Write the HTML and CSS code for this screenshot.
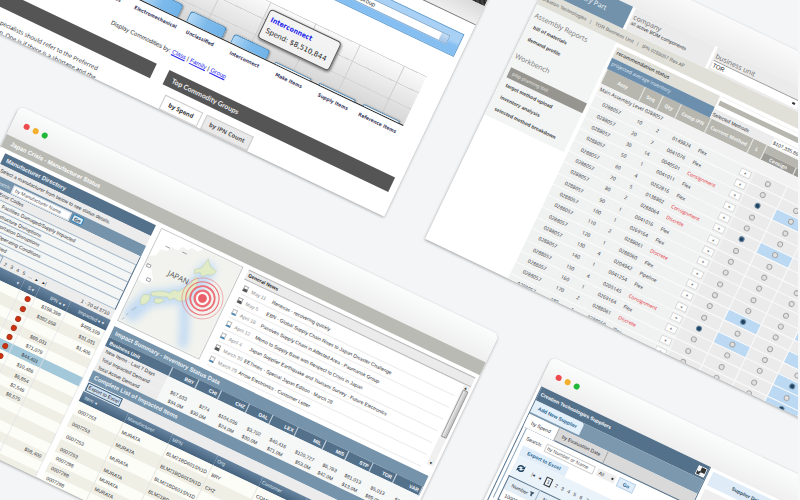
FILE: index.html
```html
<!DOCTYPE html>
<html lang="en">
<head>
<meta charset="utf-8">
<title>Application windows</title>
<link rel="stylesheet" href="styles.css">
</head>
<body>
<main class="stage">

<section class="win win-spend">
  <div class="sp-dark"></div>
  <div class="sp-head"></div>
  <div class="sp-filter"><select aria-label="Commodity group"><option>Commodity Group</option></select></div>
  <div class="chart">
    <div class="plot">
      <div class="cat"><i class="bar b12"></i></div>
      <div class="cat"><i class="bar b12"></i></div>
      <div class="cat"><i class="bar b10"></i></div>
      <div class="cat"><i class="bar b8"></i></div>
      <div class="cat"><i class="bar b1"></i></div>
      <div class="cat"><i class="bar b1"></i></div>
      <div class="cat"><i class="bar b1"></i></div>
    </div>
    <div class="axis">
      <span>Passives</span><span>Electromechanical</span><span>Unclassified</span><span>Interconnect</span><span>Make Items</span><span>Supply Items</span><span>Reference Items</span>
    </div>
    <div class="tip"><b>Interconnect</b><span>Spend: $8,510,844</span></div>
  </div>
  <p class="sp-by">Display Commodities by: <a href="#">Class</a> | <a href="#">Family</a> | <a href="#">Group</a></p>
  <div class="sp-cols">
    <div class="sp-left">
      <h2></h2>
      <p>Commodity specialists should refer to the Preferred<br>Supplier reason. One is if there is a shortage and the</p>
    </div>
    <div class="sp-right">
      <h2>Top Commodity Groups</h2>
      <div class="sp-tabs"><button class="on">by Spend</button><button>by IPN Count</button></div>
    </div>
  </div>
</section>

<section class="win win-plan">
  <div class="pl-chrome"></div>
  <div class="pl-top">
    <div class="pl-tab">Query Part</div>
    <div class="pl-cell"><b>company</b><span>all active BOM components</span></div>
    <div class="pl-cell"><b>business unit</b><select aria-label="business unit"><option>TOR</option></select></div>
  </div>
  <div class="pl-crumb">Creation Technologies &nbsp; | &nbsp; TOR Business Unit &nbsp; | &nbsp; IPN 0288057 Rev AF</div>
  <div class="pl-body">
    <nav class="pl-side">
      <h3>Assembly Reports</h3>
      <a href="#">bill of materials</a>
      <a href="#">demand profile</a>
      <h3>Workbench</h3>
      <a href="#" class="on">pibp planning tool</a>
      <a href="#">target method upload</a>
      <a href="#">inventory analysis</a>
      <a href="#">selected method breakdown</a>
    </nav>
    <div class="pl-main">
      <div class="pl-sum">
        <div class="pl-status"><span>recommendation status</span><span class="blue">projected average inventory</span></div>
        <div class="pl-methods">
          <div class="pl-strip"></div>
          <div class="pl-sel"><span>Selected Methods</span><span class="amt">$107,335.86</span></div>
        </div>
      </div>
      <table class="pl-table">
        <colgroup><col class="w42"><col class="w20"><col class="w20"><col class="w33"><col class="w47"><col class="w15"><col class="w36"><col class="w36"><col class="w36"><col class="w36"></colgroup>
        <thead>
          <tr><th rowspan="2">Assy</th><th rowspan="2">Seq</th><th rowspan="2">Qty</th><th rowspan="2">Comp IPN</th><th rowspan="2">Current Method</th><th rowspan="2">L</th><th colspan="4"></th></tr>
          <tr class="sub"><th>Consign</th><th>Discrete</th><th>Pipeline</th><th>Flex</th></tr>
        </thead>
        <tbody id="plan-rows">
          <tr class="level"><td colspan="10">Main Assembly Level 0288057</td></tr>
        </tbody>
      </table>
    </div>
  </div>
</section>

<section class="win win-crisis">
  <div class="chrome"><i></i><i></i><i></i></div>
  <h1>Japan Crisis - Manufacturer Status</h1>
  <div class="cr-body">
    <div class="cr-left">
      <h2>Manufacturer Directory</h2>
      <p class="note">Select a manufacturer from below to see status details.</p>
      <form class="cr-search"><label for="mf">Search:</label><input id="mf" placeholder="by Manufacturer Name"><button type="button">Go</button></form>
      <ul class="codes">
        <li>Error Codes</li><li class="in">Facilities Damaged/Supply Impacted</li><li>Infrastructure Disruptions</li><li>Transportation Disruptions</li><li>Normal Operating Conditions</li><li>Undetermined</li>
      </ul>
      <div class="pager"><span class="pg"><b>1</b><a href="#">2</a><a href="#">3</a><a href="#">4</a><a href="#">5</a><a href="#">...</a><a href="#">▸</a><a href="#">▸|</a></span><span>1 - 20 of 3710</span></div>
      <table class="mf">
        <thead><tr><th>▾</th><th>S ▾</th><th>IPN ◂ ▾</th><th>Impacted ◂ ▾</th></tr></thead>
        <tbody>
          <tr><td></td><td><i></i></td><td>$198,399</td><td>$499,109</td></tr>
          <tr><td></td><td><i></i></td><td>$382,658</td><td>$31,031</td></tr>
          <tr><td></td><td><i></i></td><td></td><td>$1,406</td></tr>
          <tr><td></td><td><i></i></td><td>$89,031</td><td></td></tr>
          <tr><td></td><td><i></i></td><td>$71,079</td><td></td></tr>
          <tr class="sel"><td></td><td><i></i></td><td>$44,401</td><td></td></tr>
          <tr><td></td><td><i></i></td><td>$10,486</td><td></td></tr>
          <tr><td></td><td></td><td>$6,854</td><td></td></tr>
          <tr><td></td><td></td><td>$2,546</td><td></td></tr>
          <tr><td></td><td></td><td>$8,575</td><td></td></tr>
          <tr><td></td><td></td><td></td><td></td></tr>
          <tr><td></td><td></td><td></td><td></td></tr>
          <tr><td></td><td></td><td></td><td></td></tr>
          <tr><td></td><td></td><td></td><td>$58,400</td></tr>
          <tr><td></td><td></td><td></td><td></td></tr>
          <tr><td></td><td></td><td></td><td></td></tr>
        </tbody>
      </table>
    </div>
    <div class="cr-right">
      <div class="cr-top">
        <svg class="map" viewBox="0 0 91 103" role="img" aria-label="Map of Japan">
          <defs><filter id="soft" x="-30%" y="-30%" width="160%" height="160%"><feGaussianBlur stdDeviation="4"/></filter></defs>
          <rect width="91" height="103" fill="#f2f3ee"/>
          <g filter="url(#soft)" fill="none" stroke="#b9d6f4" stroke-linecap="round" stroke-linejoin="round" opacity=".8">
            <path d="M60 18 L58 34 L50 50 L34 60 L18 70 L10 90" stroke-width="17"/>
            <path d="M52 56 L62 76 L70 96" stroke-width="10"/>
          </g>
          <path d="M0 0H47L43 5L36 4L33 8L27 7L24 13L17 12L14 18L8 19L6 27L0 30Z" fill="#fff"/>
          <path d="M0 41 L6 38 L9 43 L14 50 L12 57 L5 58 L0 56Z" fill="#fff"/>
          <g fill="#e1ebc5" stroke="#b9cdb0" stroke-width=".5">
            <path d="M56 7 L61 13 L69 15 L67 20 L62 22 L58 26 L54 23 L50 27 L48 23 L54 18Z"/>
            <path d="M52 29 L56 30 L57 38 L55 47 L54 54 L50 58 L46 59 L42 58 L38 62 L35 60 L31 62 L25 64 L20 66 L18 63 L25 58 L31 56 L35 56 L38 51 L43 50 L48 42 L51 36Z"/>
            <path d="M24 67 L30 64 L34 65 L30 70 L25 71Z"/>
            <path d="M12 68 L18 66 L20 70 L18 76 L14 79 L11 74Z"/>
          </g>
          <path d="M11 83 L8 88 M6 92 L5 95 M4 98 L3 101" stroke="#99a7ad" stroke-width=".7"/>
          <g fill="none" stroke="#ed6e76"><circle cx="68" cy="46" r="8" stroke-width="2.4" fill="#fbf6f6"/><circle cx="68" cy="46" r="12.5" stroke-width="1.8"/><circle cx="68" cy="46" r="17" stroke-width="1.1"/><circle cx="68" cy="46" r="21" stroke-width=".7" opacity=".7"/></g>
          <circle cx="68" cy="46" r="4.5" fill="#ea6068"/>
          <text x="25" y="40" class="map-name">JAPAN</text>
          <path d="M11 14h5M29 12h5M2 38h4v3h-4zM8 51h4v3h-4z" fill="none" stroke="#8e9298" stroke-width=".8"/>
        </svg>
        <div class="news">
          <h3>General News</h3>
          <div class="news-box">
            <ul>
              <li><i></i><time>May 11</time>Renesas - recovering quickly</li>
              <li><i></i><time>May 5</time>EBN - Global Supply Chain Rises to Japan Disaster Challenge</li>
              <li><i class="q"></i><time>April 18</time>Passives Supply Chain in Affected Area - Paumanok Group</li>
              <li><i class="q"></i><time>April 12</time>Memo to Supply Base with Respect to Crisis in Japan</li>
              <li><i class="q"></i><time>April 4</time>Japan Supplier Earthquake and Tsunami Survey - Future Electronics</li>
              <li><i></i><time>March 30</time>EETimes - Special Japan Edition - March 28</li>
              <li><i class="q"></i><time>March 29</time>Arrow Electronics - Customer Letter</li>
            </ul>
            <div class="scroll"><span>▴</span><i></i><span>▾</span></div>
          </div>
        </div>
      </div>
      <h2 class="lt">Impact Summary - Inventory Status Data</h2>
      <table class="impact">
        <colgroup><col class="c70"><col class="c29"><col class="c25"><col class="c31"><col class="c26"><col class="c28"><col class="c31"><col class="c25"><col class="c27"><col class="c26"><col></colgroup>
        <thead><tr><th>Business Unit</th><th>BRY</th><th>CHI</th><th>CHZ</th><th>DAL</th><th>LEX</th><th>MIL</th><th>MIS</th><th>STP</th><th>TOR</th><th>VAR</th></tr></thead>
        <tbody>
          <tr><th>New Items - Last 7 Days</th><td></td><td></td><td></td><td></td><td></td><td></td><td></td><td></td><td></td><td></td></tr>
          <tr><th>Total Impacted Demand</th><td>$67,633</td><td>$274</td><td>$104,036</td><td>$3,702</td><td>$40,416</td><td>$120,727</td><td>$6,783</td><td>$81,013</td><td>$5,013</td><td>$13,013</td></tr>
          <tr><th>Total Active Demand</th><td>$34.0M</td><td>$30.0M</td><td>$24.0M</td><td>$30.0M</td><td>$21.0M</td><td>$53.0M</td><td>$42.0M</td><td>$13.0M</td><td>$89.0M</td><td>$13.0M</td></tr>
        </tbody>
      </table>
      <h2 class="lt">Complete List of Impacted Items</h2>
      <div class="tools"><button>Export to Excel</button></div>
      <table class="items">
        <thead><tr><th>Item ◂</th><th>Manufacturer</th><th>MPN</th><th>Org</th><th>Customer</th><th></th><th></th></tr></thead>
        <tbody>
          <tr><td>0007253</td><td>MURATA</td><td>BLM21BD601SN1D</td><td>BRY</td><td>COMMSCOPE</td><td></td><td></td></tr>
          <tr><td>0007253</td><td>MURATA</td><td>BLM21BD601SN1D</td><td>CHZ</td><td></td><td></td><td></td></tr>
          <tr><td>0007253</td><td>MURATA</td><td>BLM21BD601SN1D</td><td></td><td></td><td></td><td></td></tr>
          <tr><td>0007253</td><td>MURATA</td><td>BLM21BD601SN1D</td><td></td><td></td><td></td><td></td></tr>
          <tr class="s"><td>0007298</td><td>MURATA</td><td></td><td></td><td></td><td></td><td></td></tr>
          <tr class="s"><td>0007298</td><td>MURATA</td><td></td><td></td><td></td><td></td><td></td></tr>
          <tr class="s"><td>0007298</td><td></td><td></td><td></td><td></td><td></td><td></td></tr>
        </tbody>
      </table>
    </div>
  </div>
</section>

<section class="win win-supp">
  <div class="chrome"><i></i><i></i><i></i></div>
  <div class="su-body">
    <div class="su-left">
      <div class="su-title"><h1>Creation Technologies Suppliers</h1>
        <svg viewBox="0 0 10 10" aria-hidden="true"><rect width="10" height="10" rx="1" fill="#f4f6f8"/><path d="M4 1H9V6H4Z M1 5V9H5L3.8 7.8L5 6.6L3.6 5.2L2.3 6.4Z" fill="#333"/></svg>
      </div>
      <div class="su-bar"><button>Add New Supplier</button></div>
      <div class="su-tabs"><button class="on">by Spend</button><button>by Evaluation Date</button></div>
      <div class="su-pane">
        <form class="su-search"><label for="ss">Search:</label><input id="ss" placeholder="by Number or Name"><select aria-label="Scope"><option>All</option></select><button type="button">Go</button></form>
        <button class="su-export">Export to Excel</button>
        <div class="su-pager">
          <svg viewBox="0 0 8 8" aria-hidden="true"><path d="M1 4A3 3 0 0 1 6 2M7 4A3 3 0 0 1 2 6" fill="none" stroke="#1d3f5c" stroke-width="1.6"/><path d="M7.6 0V3.6H4.2ZM.4 8V4.4H3.8Z" fill="#1d3f5c"/></svg>
          <a href="#">|◂</a><a href="#">◂</a><b>1</b><a href="#">2</a><a href="#">3</a><a href="#">4</a><a href="#">5</a><a href="#">6</a><a href="#">7</a>
        </div>
        <table class="su-table"><thead><tr><th>Number <svg viewBox="0 0 6 6" aria-hidden="true"><path d="M0 0H6L4 3V6L2 5V3Z" fill="#44586b"/></svg></th><th>Name</th></tr></thead><tbody><tr><td>100001</td><td></td></tr></tbody></table>
      </div>
    </div>
    <div class="su-right"><h2>Supplier Details</h2><div></div></div>
  </div>
</section>

</main>
<script src="rows.js"></script>
</body>
</html>
```
FILE: styles.css
```css
* { box-sizing: border-box; margin: 0; padding: 0; }
html, body { height: 100%; }
body {
  background: #f3f5f7;
  font: 5px/1 "Liberation Sans", Arial, sans-serif;
  color: #2c2e31;
}
button, input, select { font: inherit; color: inherit; border: 0; border-radius: 0; background: none; appearance: none; }
ul { list-style: none; }
table { border-collapse: collapse; table-layout: fixed; width: 100%; }
i { display: block; }
a { color: inherit; text-decoration: none; }

.stage { position: relative; height: 100vh; overflow: hidden; border-right: 2px solid #f6f7f8; }
.win {
  position: absolute;
  transform: rotate(25.5deg);
  transform-origin: 0 0;
  overflow: hidden;
  white-space: nowrap;
  background: #fff;
  box-shadow: 0 1px 3px rgba(0, 0, 0, .35);
}
.chrome { display: flex; align-items: center; gap: 4px; height: 31px; padding-left: 12px; background: linear-gradient(#fbfcfc, #efefef); }
.chrome i { width: 6px; height: 6px; border-radius: 50%; background: #ee4b4e; }
.chrome i:nth-child(2) { background: #f2b02c; }
.chrome i:nth-child(3) { background: #1fb83a; }

/* Spend */
.win-spend { left: 44px; top: -278px; width: 520px; height: 300px; }
.sp-dark { height: 67px; background: repeating-linear-gradient(45deg, #2b2b2b 0 2px, #444 2px 4px); }
.sp-head { height: 21px; background: linear-gradient(#dadada, #efefef); border-bottom: 1px solid #777; }
.sp-filter { height: 25px; margin: 13px 6px 0 150px; padding: 6px 11px 0 60px; background: linear-gradient(#a9d0f5 40%, #85bff2 60%); border: 1px solid #5c9cd2; }
.sp-filter select { display: block; width: 100%; height: 10px; padding-left: 160px; font-size: 6px; border: 1px solid #7fa9cf; background: linear-gradient(#c5dcf5, #a3c4e8) right / 8px 100% no-repeat, linear-gradient(45deg, #2f5f8f, #2f5f8f) right 3px center / 2px 3px no-repeat, #fff; }
.chart { position: relative; margin: 29px 22px 0 154px; }
.plot { display: flex; height: 55px; background: repeating-linear-gradient(#d5d5d5 0 1px, transparent 1px 18px), linear-gradient(#fafafa, #d6d6d6); border-bottom: 1px solid #222; }
.cat { flex: 1; display: flex; align-items: flex-end; justify-content: center; background: linear-gradient(#cfcfcf, #cfcfcf) center / 1px 100% no-repeat; }
.bar { width: 40px; border: 1px solid #3f8ac4; border-bottom: 0; border-radius: 4px 4px 0 0; background: linear-gradient(90deg, #b2d8f5, #7dbaec 50%, #71b3e8); box-shadow: 1px 0 2px rgba(0, 0, 0, .4); }
.b12 { height: 14px; } .b10 { height: 12px; } .b8 { height: 10px; } .b1 { height: 2px; border-radius: 1px 1px 0 0; background: #eee; }
.axis { display: flex; margin-top: 5px; font: bold 5px/7px "DejaVu Sans Condensed", "DejaVu Sans", sans-serif; color: #3a3a60; }
.axis span { flex: 1; width: 0; display: flex; justify-content: center; }
.tip { position: absolute; left: 174px; top: 6px; width: 79px; height: 32px; padding: 4px; border: 1px solid #555; border-radius: 4px; background: rgba(242, 242, 242, .95); box-shadow: 1px 1px 3px rgba(0, 0, 0, .6); font: 7px/12px "DejaVu Sans", sans-serif; color: #222; }
.tip b { display: block; font: bold 7px/11px "DejaVu Sans Condensed", "DejaVu Sans", sans-serif; color: #1d1dee; }
.sp-by { margin: 16px 0 0 190px; height: 22px; font-size: 6px; line-height: 8px; }
.sp-by a { color: #2323ee; text-decoration: underline; }
.sp-cols { display: flex; gap: 14px; padding-right: 7px; }
.sp-cols h2 { height: 16px; padding-left: 7px; background: #555; color: #eee; font: bold 7px/16px Lato, sans-serif; }
.sp-left { width: 249px; }
.sp-left p { margin-top: 10px; padding-left: 53px; font: 6px/9px "Open Sans", sans-serif; }
.sp-right { flex: 1; }
.sp-tabs { display: flex; gap: 4px; padding: 8px 0 0 7px; }
.sp-tabs button { width: 52px; height: 16px; border: 1px solid #ccc; background: #e9e9e9; font: bold 6px/14px "Open Sans", sans-serif; color: #555; }
.sp-tabs .on { width: 42px; background: #fff; color: #333; }

/* Planning */
.win-plan { left: 567px; top: -59px; width: 530px; height: 330px; }
.pl-chrome { height: 31px; background: linear-gradient(#fafafa, #ededed); }
.pl-top { display: flex; gap: 3px; height: 24px; }
.pl-tab { width: 88px; padding-left: 29px; background: #7292ab; color: #f4f7f9; font: 7px/26px "Open Sans", sans-serif; }
.pl-cell { width: 88px; padding: 4px 2px; background: #ebebeb; }
.pl-cell:last-child { flex: 1; }
.pl-cell b { display: block; font: 7px/9px "Open Sans", sans-serif; color: #6a6a6a; }
.pl-cell select { display: block; width: 96px; height: 9px; padding-left: 1px; font-size: 6px; border-top: 1px solid #999; background: linear-gradient(#333, #333) right 4px center / 3px 2px no-repeat, #fff; }
.pl-crumb { height: 15px; padding: 0 2px; background: #e0e0d9; line-height: 15px; color: #666; }
.pl-body { display: flex; gap: 3px; }
.pl-side { width: 88px; height: 122px; padding: 5px 0 0 3px; background: #f3f4f4; }
.pl-side h3 { font: 7px/12px "Open Sans", sans-serif; color: #777; }
.pl-side a + h3 { margin-top: 7px; margin-bottom: 6px; }
.pl-side a { display: block; height: 13px; padding-left: 4px; font-weight: bold; line-height: 11px; color: #444; }
.pl-side .on { height: 11px; margin: 0 0 2px 1px; background: #96958f; color: #e4e4e0; font-weight: normal; }
.pl-main { flex: 1; }
.pl-sum { display: flex; padding-top: 4px; }
.pl-status { width: 114px; }
.pl-status span { display: block; height: 12px; padding-left: 2px; background: #e0e0d9; font: 5px/11px "Open Sans", sans-serif; font-weight: 600; color: #333; }
.pl-status .blue { background: #6c8fae; color: #e4edf4; font-weight: 400; }
.pl-methods { flex: 1; }
.pl-strip { height: 14px; border: solid #fff; border-width: 4px 0 5px 2px; background: #b7b7b0; }
.pl-sel { display: flex; height: 10px; line-height: 10px; background: #ececec; }
.pl-sel span { width: 66px; padding-left: 1px; }
.pl-sel .amt { flex: 1; background: #fff; border: 1px solid #eee; line-height: 8px; }
.pl-table { width: 321px; font-family: "Open Sans", sans-serif; }
.w42 { width: 42px; } .w20 { width: 20px; } .w33 { width: 33px; } .w47 { width: 47px; } .w15 { width: 15px; } .w36 { width: 36px; }
.pl-table th { height: 8px; background: #b7b7b0; color: #f5f5f2; border-left: 1px solid #e6e6e2; }
.pl-table .sub th { background: #9c9b96; }
.pl-table td { height: 12px; text-align: center; background: #f0f1f1; border: 1px solid #fafafa; border-width: 0 0 1px; }
.pl-table tbody tr:nth-child(3n+2) td { height: 13px; }
.pl-table .level td { text-align: left; padding-left: 2px; background: #f2f2f2; }
.pl-table td.m { text-align: left; padding-left: 2px; }
.pl-table .d { color: #e5262d; }
.pl-table td.r { background: #ebebeb; border-width: 0 1px 1px 0; }
.pl-table td.hl { background: #bbd9f2; }
.pl-table button { display: block; width: 12px; height: 8px; margin: 0 auto; background: #fff; border: 1px solid #d8d8d8; line-height: 6px; }
.pl-table input { display: block; width: 6px; height: 6px; margin: 0 auto; border: 1px solid #a6a6a6; border-radius: 50%; background: #e0e0e0; }
.pl-table input:checked { background: #1f4566; border-color: #6f8aa0; }

/* Crisis */
.win-crisis { left: 20px; top: 106px; width: 531px; height: 328px; border-radius: 6px 6px 0 0; }
.win-crisis h1 { height: 14px; padding-left: 8px; background: #b9bab3; color: #fff; font: bold 6px/14px "Liberation Sans", sans-serif; }
.cr-body { display: flex; gap: 6px; padding: 4px 3px 0 7px; }
.cr-left { width: 167px; flex: none; }
.win-crisis h2 { height: 12px; padding-left: 4px; background: #54718b; color: #eef3f7; font: bold 6px/12px "Liberation Sans", sans-serif; }
.win-crisis h2.lt { background: #7593ab; }
.note { height: 11px; padding-left: 3px; line-height: 11px; background: #ececec; }
.cr-search { display: flex; align-items: center; gap: 2px; height: 12px; padding-left: 3px; background: #7593ab; color: #e8eff5; }
.cr-search label { width: 17px; }
.cr-search input { width: 64px; height: 9px; padding: 0 2px; background: #fff; color: #444; border: 1px solid #d6dde3; }
::placeholder { color: #555; opacity: 1; }
.cr-search button { width: 12px; height: 8px; border: 1px solid #2f7fb7; border-radius: 2px; background: #dcecf7; color: #234; font-weight: bold; line-height: 6px; }
.codes { display: grid; grid-auto-rows: 1fr; height: 59px; border-right: 1px solid #54718b; background: #f4f5f5; }
.codes li { display: flex; align-items: center; padding-left: 12px; border-bottom: 1px solid #a3b8c9; }
.codes .in { padding-left: 20px; }
.codes li:first-child { background: #ececec; }
.pager { display: flex; justify-content: space-between; height: 11px; padding: 0 4px 0 36px; line-height: 12px; background: #ececec; }
.pg { display: flex; gap: 4px; }
.pg b { padding: 0 1px; border: 1px solid #8aa8c0; line-height: 8px; }
.mf th { height: 12px; background: linear-gradient(#6683a0, #46637e); color: #e5ecf2; font-weight: normal; text-align: right; padding-right: 3px; }
.mf th:nth-child(1) { width: 72px; }
.mf th:nth-child(2) { width: 17px; }
.mf th:nth-child(3) { width: 34px; }
.mf tbody tr { background: #fdfdf8; }
.mf tbody tr:nth-child(even) { background: #f0efe6; }
.mf tbody tr.sel { background: #a3c8da; }
.mf td { height: 10px; text-align: right; padding-right: 3px; border-right: 1px solid rgba(220, 225, 228, .6); }
.mf tr:nth-child(5n+2) td { height: 12px; }
.mf td i { width: 6px; height: 6px; margin-left: auto; border-radius: 50%; background: #d0310f; border: 1px solid #a8371f; }
.cr-right { flex: 1; min-width: 0; }
.cr-top { display: flex; gap: 6px; height: 103px; margin-bottom: 6px; }
.map { width: 91px; height: 103px; border: 1px solid #c5c8c8; flex: none; }
.map-name { font: 8px "Open Sans", sans-serif; fill: #555; }
.news { flex: 1; }
.news h3 { height: 11px; padding-left: 2px; border: 1px solid #b9b9b9; border-width: 1px 0; background: #ebebeb; font: bold 5px/9px "Liberation Sans", sans-serif; color: #222; }
.news-box { display: flex; }
.news ul { flex: 1; padding: 2px 4px 0 3px; }
.news li { display: flex; align-items: center; height: 13px; border-bottom: 1px solid #ececec; }
.news time { flex: none; width: 23px; color: #888; }
.news li i { flex: none; width: 5px; height: 6px; margin-right: 4px; border: 1px solid #aaa; border-bottom: 3px solid #555; background: #fff; }
.news li i.q { border: 1px solid #bbb; border-bottom: 2px solid #4f87b3; }
.scroll { display: flex; flex-direction: column; align-items: center; width: 7px; height: 88px; background: #f0f0f0; }
.scroll i { width: 6px; height: 52px; border: 1px solid #999; border-radius: 1px; background: linear-gradient(90deg, #eee, #bbb); }
.scroll span:last-child { margin-top: auto; }
.impact th, .impact td { height: 9px; text-align: right; padding-right: 2px; }
.impact thead th { height: 10px; background: #54718b; color: #fff; border-right: 1px solid #c5d2dc; }
.impact th:first-child { text-align: left; padding-left: 3px; }
.impact tbody th { background: #ececec; font-weight: normal; }
.impact tbody td { background: #f6f8f8; }
.c70 { width: 70px; } .c29 { width: 29px; } .c25 { width: 25px; } .c31 { width: 31px; } .c26 { width: 26px; } .c28 { width: 28px; } .c27 { width: 27px; }
.tools { height: 11px; padding: 1px; background: #ececec; }
.tools button { display: block; width: 38px; height: 9px; border: 1px solid #345a7a; background: #cfe0ee; color: #223; line-height: 7px; }
.items th { height: 11px; text-align: left; padding-left: 2px; background: linear-gradient(#6683a0, #46637e); color: #dfe8ef; font-weight: normal; }
.items td { height: 14px; padding: 4px 0 0 2px; border-right: 1px solid #e6e6e0; background: #fdfdf8; }
.items th:first-child, .items td:first-child { padding-left: 4px; }
.items tr:nth-child(even) td { background: #f0efe6; }
.items .s td { height: 11px; padding-top: 0; }

/* Suppliers */
.win-supp { left: 552px; top: 357px; width: 530px; height: 328px; border-radius: 6px 6px 0 0; }
.su-body { display: flex; gap: 4px; padding-left: 3px; }
.su-left { width: 188px; border: 1px solid #54718b; border-top: 0; }
.su-title { display: flex; align-items: center; justify-content: space-between; height: 15px; padding: 0 1px 0 2px; background: #54718b; color: #fff; }
.su-title h1 { font: bold 5px/15px "Liberation Sans", sans-serif; }
.su-title svg { width: 10px; height: 10px; }
.su-bar { height: 15px; background: #7c98af; }
.su-bar button { width: 54px; height: 13px; background: #e3eff9; color: #1d6491; font-weight: bold; border-radius: 0 3px 0 0; }
.su-tabs { display: flex; height: 14px; background: #d9d9d9; border-bottom: 1px solid #54718b; }
.su-tabs button { width: 54px; border-right: 1px solid #aaa; }
.su-tabs .on { width: 34px; height: 14px; background: #fff; }
.su-pane { margin-left: 3px; padding: 4px 0 0 4px; border-left: 1px solid #8aa5bc; }
.su-search { display: flex; align-items: center; gap: 3px; height: 10px; }
.su-search label { padding-right: 1px; }
.su-search input { width: 54px; height: 9px; padding: 0 1px; border: 1px solid #ccc; }
.su-search select { width: 20px; height: 8px; padding-left: 2px; background: linear-gradient(#333, #333) 16px 3px / 2px 2px no-repeat, #eee; }
.su-search button { width: 18px; height: 10px; background: #e1eefa; border: 1px solid #b9d2e8; color: #1d6491; font-weight: bold; }
.su-export { display: block; width: 51px; height: 11px; margin-top: 3px; background: #e1eefa; color: #1d6491; font-weight: bold; }
.su-pager { display: flex; align-items: center; gap: 4px; height: 22px; padding-left: 4px; background: #ebf3fa; }
.su-pager svg { width: 8px; height: 8px; margin-right: 4px; }
.su-pager b { padding: 1px; border: 1px solid #333; font-weight: normal; }
.su-table { border: 1px solid #54718b; }
.su-table th { height: 14px; padding-left: 6px; text-align: left; font-weight: normal; background: #e4eef7; border-right: 1px solid #9db6ca; }
.su-table th:first-child { width: 34px; }
.su-table svg { width: 5px; height: 5px; }
.su-table td { height: 12px; padding-left: 4px; }
.su-right { flex: 1; padding-top: 3px; }
.su-right h2 { height: 15px; padding-left: 24px; background: #dfecf7; font: bold 5px/15px "Liberation Sans", sans-serif; color: #2d4a63; }
.su-right div { height: 200px; margin-top: 4px; background: #efefef; }
```
FILE: rows.js
```js
// seq, qty, component, method, checked column, highlighted columns
const rows = [
  [10, 2, "0149824", "Flex", 3, [3]],
  [20, 7, "0041076", "Flex", 3, [3]],
  [30, 14, "0040501", "Consignment", 0, [1]],
  [50, 1, "0041011", "Flex", 3, [3]],
  [60, 4, "0262816", "Flex", 3, [3]],
  [70, 5, "0138802", "Consignment", 0, [1]],
  [80, 2, "0288064", "Discrete", 3, [3]],
  [90, 1, "0041016", "Flex", 3, [3]],
  [100, 1, "0269164", "Flex", 3, [3]],
  [110, 2, "0288061", "Discrete", 3, [3]],
  [120, 1, "0288060", "Flex", 3, [3]],
  [130, 4, "0204942", "Pipeline", 1, [1]],
  [140, 1, "0041254", "Flex", 3, [3]],
  [150, 4, "0205145", "Consignment", 0, [1]],
  [160, 1, "0269164", "Flex", 3, [3]],
  [170, 2, "0288061", "Discrete", -1, [3]],
  [180, 1, "0288060", "Flex", 3, [3]]
];
const names = ["Consign", "Discrete", "Pipeline", "Flex"];
document.getElementById("plan-rows").insertAdjacentHTML("beforeend", rows.map(([seq, qty, ipn, method, on, hl]) => {
  const red = method === "Consignment" || method === "Discrete" ? " d" : "";
  const radios = names.map((n, i) =>
    `<td class="r${hl.includes(i) ? " hl" : ""}"><input type="radio" name="m${seq}" aria-label="${n} ${seq}"${on === i ? " checked" : ""}></td>`).join("");
  return `<tr><td>0288057</td><td>${seq}</td><td>${qty}</td><td>${ipn}</td><td class="m${red}">${method}</td><td><button>+</button></td>${radios}</tr>`;
}).join(""));
```
